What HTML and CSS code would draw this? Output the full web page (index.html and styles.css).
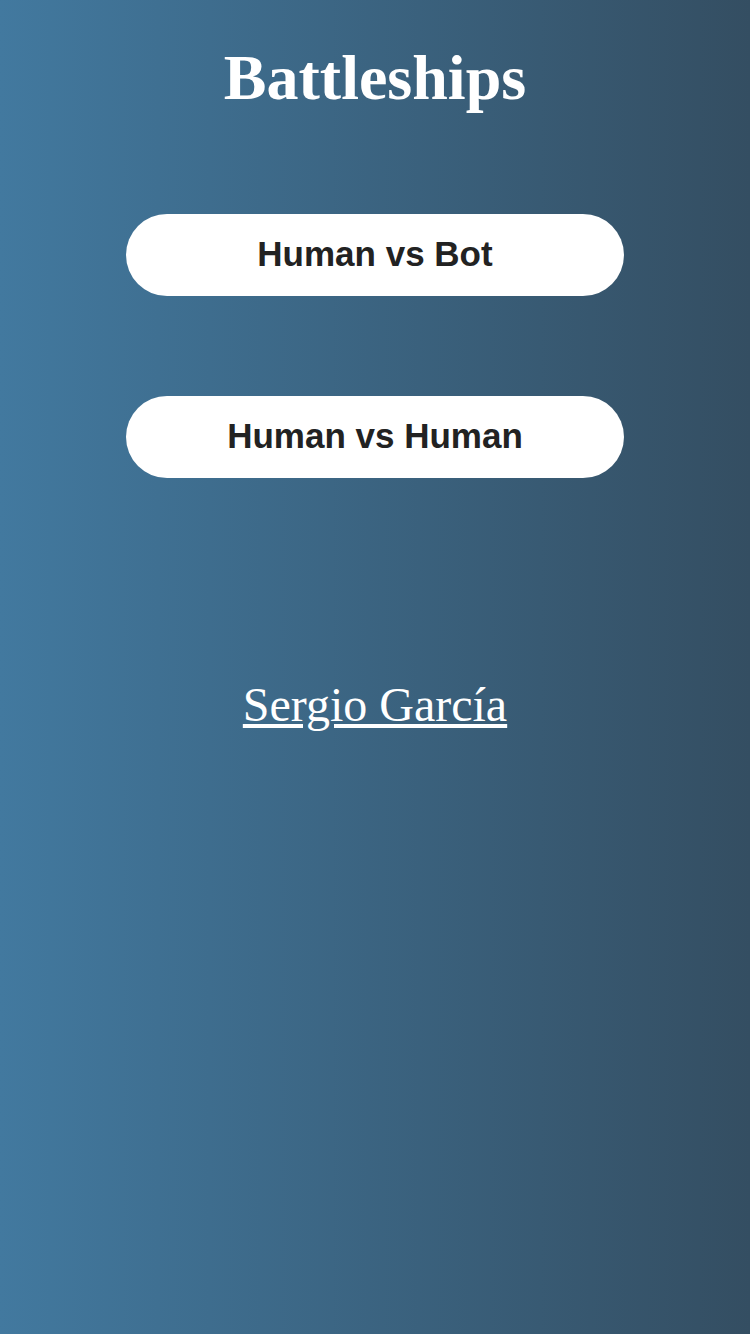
FILE: index.html
```html
<!DOCTYPE html>
<html lang="en">
<head>
<meta charset="utf-8">
<title>Battleships</title>
<link rel="stylesheet" href="styles.css">
</head>
<body>
<main class="page">
  <h1 class="title">Battleships</h1>
  <div class="menu">
    <button class="mode-btn">Human vs Bot</button>
    <button class="mode-btn">Human vs Human</button>
  </div>
  <a class="author" href="#">Sergio García</a>
</main>
</body>
</html>
```
FILE: styles.css
```css
html, body {
  margin: 0;
  padding: 0;
}
body {
  width: 750px;
  height: 1334px;
  background: linear-gradient(to right, #42799f, #344e62);
  font-family: "Liberation Serif", "Times New Roman", serif;
}
.page {
  display: flex;
  flex-direction: column;
  align-items: center;
  padding-top: 43px;
}
.title {
  margin: 0;
  font-size: 64px;
  line-height: 70px;
  font-weight: bold;
  color: #ffffff;
}
.menu {
  display: flex;
  flex-direction: column;
  gap: 100px;
  margin-top: 101px;
}
.mode-btn {
  width: 498px;
  height: 82px;
  border: none;
  border-radius: 41px;
  background: #ffffff;
  color: #222222;
  font-family: "Liberation Sans", Arial, sans-serif;
  font-weight: bold;
  font-size: 35px;
  padding: 0 0 2px;
  display: flex;
  align-items: center;
  justify-content: center;
}
.author {
  margin-top: 199px;
  font-size: 48px;
  line-height: 56px;
  color: #ffffff;
  text-decoration: underline;
}
```
